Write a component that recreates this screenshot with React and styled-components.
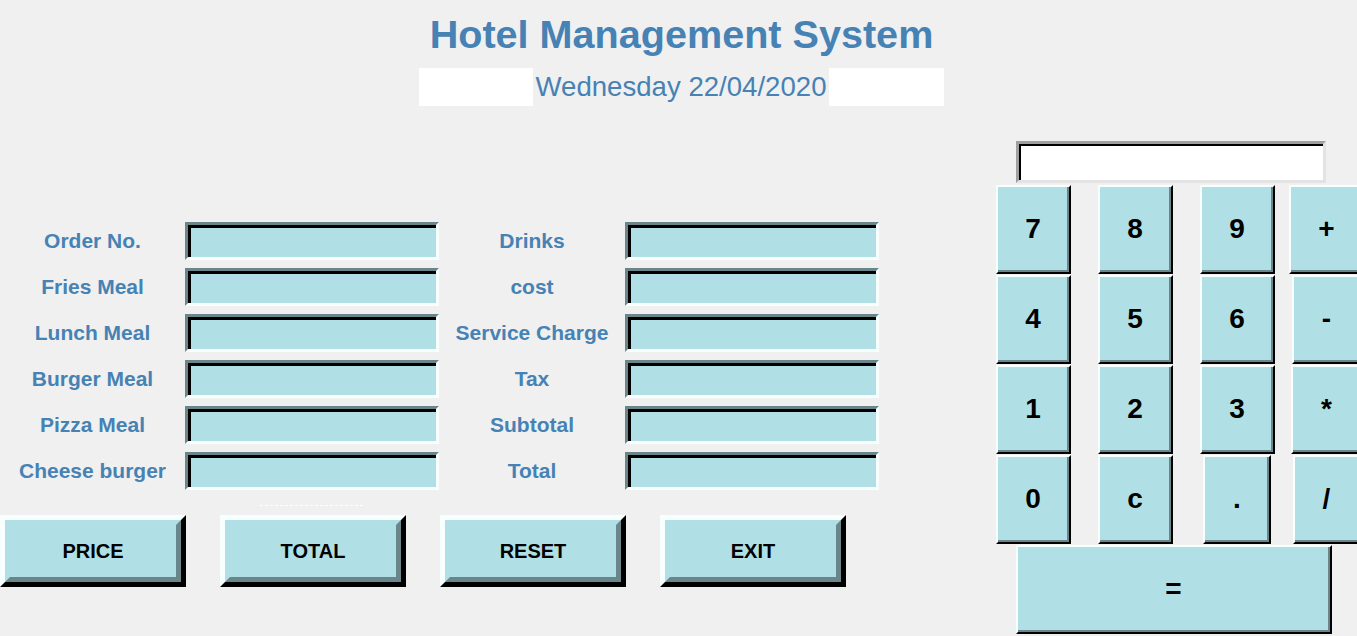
import React from 'react'
import styled, { createGlobalStyle } from 'styled-components'

const GlobalStyle = createGlobalStyle`
html, body {
  margin: 0;
  padding: 0;
  background: #f0f0f0;
  overflow: hidden;
  font-family: "Liberation Sans", Arial, sans-serif;
}
`;

const Window = styled.div`
width: 1365px;
height: 636px;
display: flex;
flex-direction: column;
`;

const Header = styled.header`
display: flex;
flex-direction: column;
align-items: center;
padding-top: 12px;
padding-right: 2px;
`;

const Title = styled.h1`
margin: 0;
font-size: 39.6px;
line-height: 45px;
font-weight: bold;
color: #4682b4;
`;

const DateRow = styled.div`
display: flex;
margin-top: 11px;
height: 38px;
`;

const Blank = styled.div`
width: ${p => p.$w}px;
background: #ffffff;
`;

const DateText = styled.div`
width: 296px;
text-align: center;
font-size: 27.6px;
line-height: 38px;
color: #4682b4;
white-space: nowrap;
`;

const Main = styled.div`
display: flex;
`;

const LeftPanel = styled.div`
width: 985px;
padding-top: 116px;
display: flex;
flex-direction: column;
`;

const Form = styled.div`
display: grid;
grid-template-columns: 185px 254px 186px 254px;
grid-auto-rows: 38px;
row-gap: 8px;
`;

const Label = styled.div`
text-align: center;
font-size: 21px;
font-weight: bold;
line-height: 38px;
color: #4682b4;
white-space: nowrap;
`;

const Entry = styled.input`
box-sizing: border-box;
width: 254px;
height: 38px;
margin: 0;
padding: 0 6px;
background: #b0e0e6;
border: 3px solid;
border-color: #6a868a #f8ffff #f8ffff #6a868a;
box-shadow: inset 3px 3px 0 #000;
outline: none;
font-size: 18px;
`;

const DashRule = styled.div`
width: 103px;
margin: 15px 0 9px 260px;
border-top: 1px dashed rgba(255, 255, 255, 0.9);
`;

const ButtonRow = styled.div`
display: flex;
gap: 34px;
`;

const ActionButton = styled.button`
box-sizing: border-box;
width: 186px;
height: 72px;
padding: 0;
background: #b0e0e6;
border: 5px solid;
border-color: #f8ffff #000 #000 #f8ffff;
cursor: pointer;
`;

const ButtonFace = styled.span`
box-sizing: border-box;
display: flex;
align-items: center;
justify-content: center;
width: 100%;
height: 100%;
border: 5px solid;
border-color: #b0e0e6 #6a868a #6a868a #b0e0e6;
font-family: "Liberation Sans", Arial, sans-serif;
font-size: 20px;
font-weight: bold;
color: #000;
`;

const CalcPanel = styled.div`
width: 383px;
padding-top: 35px;
display: flex;
flex-direction: column;
`;

const Display = styled.input`
box-sizing: border-box;
width: 310px;
height: 42px;
margin: 0 0 1px 34px;
padding: 0 6px;
background: #fff;
border: 3px solid;
border-color: #a0a0a0 #e3e3e3 #e3e3e3 #a0a0a0;
box-shadow: inset 2px 2px 0 #000;
outline: none;
font-size: 22px;
`;

const Keypad = styled.div`
display: grid;
grid-template-columns: 102px 102px 102px 77px;
grid-auto-rows: 90px;
justify-items: center;
align-items: center;
`;

const Key = styled.button`
box-sizing: border-box;
width: ${p => p.$w || 75}px;
height: 89px;
padding: 0;
background: #b0e0e6;
border: 2px solid;
border-color: #f8ffff #000 #000 #f8ffff;
box-shadow: inset -2px -2px 0 #6a868a;
font-family: "Liberation Sans", Arial, sans-serif;
font-size: 28px;
font-weight: bold;
color: #000;
cursor: pointer;
grid-column: ${p => (p.$wide ? '1 / -1' : 'auto')};
`;

const leftFields = ['Order No.', 'Fries Meal', 'Lunch Meal', 'Burger Meal', 'Pizza Meal', 'Cheese burger'];
const rightFields = ['Drinks', 'cost', 'Service Charge', 'Tax', 'Subtotal', 'Total'];

const keys = [
  { k: '7' }, { k: '8' }, { k: '9' }, { k: '+' },
  { k: '4' }, { k: '5' }, { k: '6' }, { k: '-', w: 70 },
  { k: '1' }, { k: '2' }, { k: '3' }, { k: '*', w: 72 },
  { k: '0' }, { k: 'c' }, { k: '.', w: 68 }, { k: '/', w: 68 },
];

const App = () => {
  return (
    <Window>
      <GlobalStyle />
      <Header>
        <Title>Hotel Management System</Title>
        <DateRow>
          <Blank $w={114} />
          <DateText>Wednesday 22/04/2020</DateText>
          <Blank $w={115} />
        </DateRow>
      </Header>
      <Main>
        <LeftPanel>
          <Form>
            {leftFields.map((f, i) => (
              <React.Fragment key={f}>
                <Label>{f}</Label>
                <Entry readOnly value="" />
                <Label>{rightFields[i]}</Label>
                <Entry readOnly value="" />
              </React.Fragment>
            ))}
          </Form>
          <DashRule />
          <ButtonRow>
            {['PRICE', 'TOTAL', 'RESET', 'EXIT'].map(b => (
              <ActionButton key={b}>
                <ButtonFace>{b}</ButtonFace>
              </ActionButton>
            ))}
          </ButtonRow>
        </LeftPanel>
        <CalcPanel>
          <Display readOnly value="" />
          <Keypad>
            {keys.map(({ k, w }) => (
              <Key key={k} $w={w}>{k}</Key>
            ))}
            <Key $wide $w={316}>=</Key>
          </Keypad>
        </CalcPanel>
      </Main>
    </Window>
  )
}

export default App
